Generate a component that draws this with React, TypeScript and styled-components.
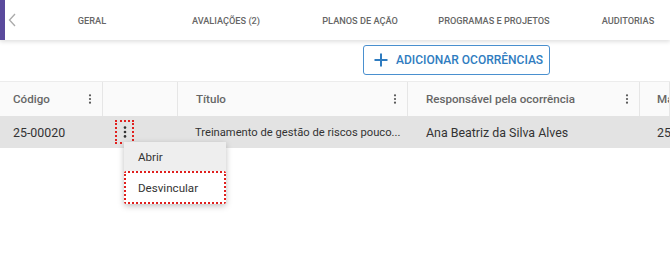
import React from "react";
import styled, { createGlobalStyle } from "styled-components";

const Global = createGlobalStyle`
  html, body { margin: 0; padding: 0; background: #fff; }
  body { font-family: Roboto, "Liberation Sans", sans-serif; width: 670px; height: 266px; overflow: hidden; }
  * { box-sizing: border-box; }
`;

const Page = styled.div`
  width: 670px;
  height: 266px;
  position: relative;
  overflow: hidden;
`;

const TabBar = styled.div`
  height: 40px;
  display: flex;
  align-items: center;
  background: #fff;
  box-shadow: 0 2px 4px rgba(0,0,0,0.12);
  position: relative;
  z-index: 1;
`;

const Accent = styled.div`
  flex: 0 0 5px;
  align-self: stretch;
  background: #5a4a9c;
`;

const Chevron = styled.div`
  flex: 0 0 20px;
  padding-left: 3px;
  display: flex;
`;

const Tab = styled.div`
  flex: 0 0 134px;
  text-align: center;
  font-size: 9.2px;
  font-weight: 500;
  color: #666;
  white-space: nowrap;
`;

const Toolbar = styled.div`
  height: 41px;
  display: flex;
  align-items: flex-start;
  padding: 5px 0 0 363px;
`;

const AddButton = styled.div`
  height: 30px;
  border: 1px solid #4a90cf;
  border-radius: 3px;
  display: flex;
  align-items: center;
  gap: 8px;
  padding: 0 6px 0 10px;
  color: #2f7cc0;
  font-size: 12px;
  font-weight: 500;
  white-space: nowrap;
`;

const Table = styled.div`
  display: flex;
  flex-direction: column;
`;

const Row = styled.div<{ $header?: boolean }>`
  display: grid;
  grid-template-columns: 103px 75px 230px 232px 1fr;
  height: ${(p) => (p.$header ? 35 : 32)}px;
  background: ${(p) => (p.$header ? "#fafafa" : "#e3e3e3")};
  border-top: ${(p) => (p.$header ? "1px solid #ececec" : "none")};
`;

const Cell = styled.div<{ $header?: boolean; $pad?: number; $size?: number }>`
  display: flex;
  align-items: center;
  justify-content: space-between;
  min-width: 0;
  padding: 0 10px 0 ${(p) => p.$pad ?? 13}px;
  border-right: ${(p) => (p.$header ? "1px solid #e6e6e6" : "none")};
  font-size: ${(p) => p.$size ?? (p.$header ? 11.6 : 12.4)}px;
  font-weight: ${(p) => (p.$header ? 500 : 400)};
  color: ${(p) => (p.$header ? "#666" : "#333")};
  white-space: nowrap;
  overflow: hidden;
`;

const Kebab = ({ color = "#555", size = 12 }: { color?: string; size?: number }) => (
  <svg width="4" height={size} viewBox="0 0 4 12" style={{ flex: "none" }}>
    <circle cx="2" cy="1.6" r="1.3" fill={color} />
    <circle cx="2" cy="6" r="1.3" fill={color} />
    <circle cx="2" cy="10.4" r="1.3" fill={color} />
  </svg>
);

const ActionCell = styled.div`
  display: flex;
  align-items: center;
  padding-left: 12px;
`;

const ActionBox = styled.div`
  width: 19px;
  height: 24px;
  border: 2px dotted #e0201e;
  display: flex;
  align-items: center;
  justify-content: center;
`;

const Menu = styled.div`
  position: absolute;
  left: 124px;
  top: 142px;
  width: 102px;
  background: #fff;
  box-shadow: 0 2px 6px rgba(0,0,0,0.25);
  border-radius: 2px;
  z-index: 2;
  display: flex;
  flex-direction: column;
`;

const MenuItem = styled.div<{ $hover?: boolean; $outlined?: boolean }>`
  height: ${(p) => (p.$outlined ? 33 : 29)}px;
  display: flex;
  align-items: center;
  padding-left: ${(p) => (p.$outlined ? 12 : 14)}px;
  font-size: 11.6px;
  color: #333;
  background: ${(p) => (p.$hover ? "#eeeeee" : "#fff")};
  border: ${(p) => (p.$outlined ? "2px dotted #e0201e" : "none")};
  border-radius: ${(p) => (p.$outlined ? "2px" : "0")};
`;

export default function App() {
  return (
    <Page>
      <Global />
      <TabBar>
        <Accent />
        <Chevron>
          <svg width="8" height="14" viewBox="0 0 8 14">
            <path d="M7 1 L1.5 7 L7 13" fill="none" stroke="#aaa" strokeWidth="1.3" />
          </svg>
        </Chevron>
        <Tab>GERAL</Tab>
        <Tab>AVALIAÇÕES (2)</Tab>
        <Tab>PLANOS DE AÇÃO</Tab>
        <Tab>PROGRAMAS E PROJETOS</Tab>
        <Tab>AUDITORIAS</Tab>
      </TabBar>
      <Toolbar>
        <AddButton>
          <svg width="14" height="14" viewBox="0 0 14 14">
            <path d="M7 0.5 V13.5 M0.5 7 H13.5" stroke="#2f7cc0" strokeWidth="2" />
          </svg>
          ADICIONAR OCORRÊNCIAS
        </AddButton>
      </Toolbar>
      <Table>
        <Row $header>
          <Cell $header>
            Código
            <Kebab color="#555" size={10} />
          </Cell>
          <Cell $header />
          <Cell $header $pad={18}>
            Título
            <Kebab color="#555" size={10} />
          </Cell>
          <Cell $header $pad={18}>
            Responsável pela ocorrência
            <Kebab color="#555" size={10} />
          </Cell>
          <Cell $header $pad={17}>Ma</Cell>
        </Row>
        <Row>
          <Cell>25-00020</Cell>
          <ActionCell>
            <ActionBox>
              <Kebab color="#333" />
            </ActionBox>
          </ActionCell>
          <Cell $pad={17} $size={11.2}>Treinamento de gestão de riscos pouco...</Cell>
          <Cell $pad={18}>Ana Beatriz da Silva Alves</Cell>
          <Cell $pad={17}>25</Cell>
        </Row>
      </Table>
      <Menu>
        <MenuItem $hover>Abrir</MenuItem>
        <MenuItem $outlined>Desvincular</MenuItem>
      </Menu>
    </Page>
  );
}
